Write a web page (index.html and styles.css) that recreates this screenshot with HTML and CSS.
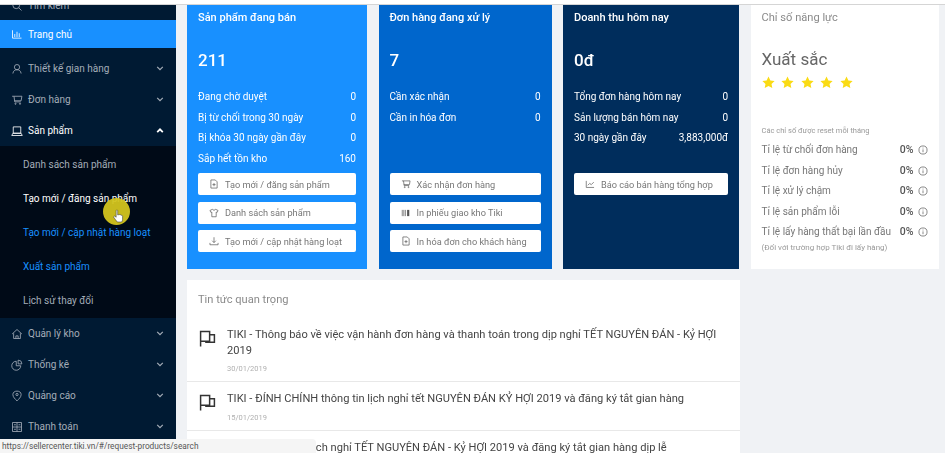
FILE: index.html
```html
<!DOCTYPE html>
<html lang="vi">
<head>
  <meta charset="UTF-8" />
  <title>Seller Center</title>
  <link rel="stylesheet" href="styles.css">
</head>
<body>
  <svg class="sprite" width="0" height="0">
    <symbol id="i-search" viewBox="0 0 16 16"><circle cx="7" cy="7" r="4.5"/><path d="M10.5 10.5 14 14"/></symbol>
    <symbol id="i-chart" viewBox="0 0 16 16"><path d="M2 3v10.5h12M5 12V8M8 12V5M11 12V7"/></symbol>
    <symbol id="i-user" viewBox="0 0 16 16"><circle cx="8" cy="5.5" r="3.5"/><path d="M2.5 14c.5-3.5 2.5-5 5.500-5s5 1.500 5.500 5"/></symbol>
    <symbol id="i-cart" viewBox="0 0 16 16"><path d="M1.500 3h13l-1 6H4.500M4 3l1 7.500h8"/><circle cx="6" cy="13" r=".8"/><circle cx="12" cy="13" r=".8"/></symbol>
    <symbol id="i-laptop" viewBox="0 0 16 16"><path d="M3 2.500h10v8.500H3zM1 14h14l-1.500-3h-11z"/></symbol>
    <symbol id="i-home" viewBox="0 0 16 16"><path d="M1.500 8 8 2l6.500 6M3.500 7v7h9V7M6.500 14v-3.500h3V14"/></symbol>
    <symbol id="i-pie" viewBox="0 0 16 16"><path d="M7 3a6 6 0 1 0 6 6H7zM9.500 1.500a5 5 0 0 1 5 5h-5z"/></symbol>
    <symbol id="i-tag" viewBox="0 0 16 16"><path d="M8 1.500c3 0 5.500 1.500 5.500 4.500 0 3.500-3 6-5.500 8.500C5.500 12 2.500 9.500 2.500 6 2.500 3 5 1.500 8 1.500z"/><circle cx="8" cy="6" r="1.500"/></symbol>
    <symbol id="i-calc" viewBox="0 0 16 16"><path d="M2 2h12v12H2zM8 2v12M2 8h12M4 5h2.500M10 5h2.500M4 11h2.500M10 11h2.500"/></symbol>
    <symbol id="i-down" viewBox="0 0 10 6"><path d="M1.500 1 5 4.500 8.500 1"/></symbol>
    <symbol id="i-file" viewBox="0 0 16 16"><path d="M3 1.500h7l3 3v10H3zM8 6.500v5M5.500 9h5"/></symbol>
    <symbol id="i-shirt" viewBox="0 0 16 16"><path d="M5.500 2 1.500 4l1.500 3 1.500-.5V14h7V6.500l1.500.5 1.500-3-4-2c-.5 2-4.500 2-5 0z"/></symbol>
    <symbol id="i-download" viewBox="0 0 16 16"><path d="M8 2v8.500M5 7.500l3 3 3-3M1.500 11v3h13v-3"/></symbol>
    <symbol id="i-barcode" viewBox="0 0 16 16"><path d="M2 3v10M4.500 3v10M7 3v10"/><path class="fat" d="M11.500 3v10"/></symbol>
    <symbol id="i-line" viewBox="0 0 16 16"><path d="M2 3v10.500h12.500M4.500 10l3-3 2.500 2 4-4"/></symbol>
    <symbol id="i-info" viewBox="0 0 16 16"><circle cx="8" cy="8" r="6.500"/><path d="M8 7v4.500M8 4.200v1.300"/></symbol>
    <symbol id="i-flag" viewBox="0 0 16 16"><path d="M1.500 15.500V1.500h8.500v9H1.500M10 4.500h4.500v7H6.500v-1"/></symbol>
    <symbol id="i-star" viewBox="0 0 16 16"><path class="solid" d="M8 .6l2.300 4.800 5.200.7-3.800 3.600 1 5.200L8 12.400l-4.700 2.500 1-5.200L.5 6.100l5.200-.7z"/></symbol>
  </svg>

  <div class="topline"></div>
  <div class="app">
    <aside class="sidebar">
      <div class="search-row"><div class="menu-row">
        <svg class="ico"><use href="#i-search"/></svg><span>Tìm kiếm</span>
      </div></div>
      <a class="menu-home"><svg class="ico"><use href="#i-chart"/></svg><span>Trang chủ</span></a>
      <div class="menu-group">
        <a class="menu-row"><svg class="ico"><use href="#i-user"/></svg><span>Thiết kế gian hàng</span><svg class="caret"><use href="#i-down"/></svg></a>
        <a class="menu-row"><svg class="ico"><use href="#i-cart"/></svg><span>Đơn hàng</span><svg class="caret"><use href="#i-down"/></svg></a>
        <a class="menu-row open"><svg class="ico"><use href="#i-laptop"/></svg><span>Sản phẩm</span><svg class="caret up"><use href="#i-down"/></svg></a>
      </div>
      <div class="submenu">
        <a>Danh sách sản phẩm</a>
        <a class="bright">Tạo mới / đăng sản phẩm</a>
        <a class="link">Tạo mới / cập nhật hàng loạt</a>
        <a class="link">Xuất sản phẩm</a>
        <a>Lịch sử thay đổi</a>
      </div>
      <div class="menu-group">
        <a class="menu-row"><svg class="ico"><use href="#i-home"/></svg><span>Quản lý kho</span><svg class="caret"><use href="#i-down"/></svg></a>
        <a class="menu-row"><svg class="ico"><use href="#i-pie"/></svg><span>Thống kê</span><svg class="caret"><use href="#i-down"/></svg></a>
        <a class="menu-row"><svg class="ico"><use href="#i-tag"/></svg><span>Quảng cáo</span><svg class="caret"><use href="#i-down"/></svg></a>
        <a class="menu-row"><svg class="ico"><use href="#i-calc"/></svg><span>Thanh toán</span><svg class="caret"><use href="#i-down"/></svg></a>
      </div>
    </aside>

    <main class="content">
      <section class="cards">
        <div class="card card-sky">
          <h3>Sản phẩm đang bán</h3>
          <div class="big">211</div>
          <ul class="stats">
            <li><span>Đang chờ duyệt</span><span>0</span></li>
            <li><span>Bị từ chối trong 30 ngày</span><span>0</span></li>
            <li><span>Bị khóa 30 ngày gần đây</span><span>0</span></li>
            <li><span>Sắp hết tồn kho</span><span>160</span></li>
          </ul>
          <div class="actions">
            <a class="btn"><svg><use href="#i-file"/></svg>Tạo mới / đăng sản phẩm</a>
            <a class="btn"><svg><use href="#i-shirt"/></svg>Danh sách sản phẩm</a>
            <a class="btn"><svg><use href="#i-download"/></svg>Tạo mới / cập nhật hàng loạt</a>
          </div>
        </div>

        <div class="card card-blue">
          <h3>Đơn hàng đang xử lý</h3>
          <div class="big">7</div>
          <ul class="stats">
            <li><span>Cần xác nhận</span><span>0</span></li>
            <li><span>Cần in hóa đơn</span><span>0</span></li>
          </ul>
          <div class="actions">
            <a class="btn"><svg><use href="#i-cart"/></svg>Xác nhận đơn hàng</a>
            <a class="btn"><svg><use href="#i-barcode"/></svg>In phiếu giao kho Tiki</a>
            <a class="btn"><svg><use href="#i-file"/></svg>In hóa đơn cho khách hàng</a>
          </div>
        </div>

        <div class="card card-navy">
          <h3>Doanh thu hôm nay</h3>
          <div class="big">0đ</div>
          <ul class="stats">
            <li><span>Tổng đơn hàng hôm nay</span><span>0</span></li>
            <li><span>Sản lượng bán hôm nay</span><span>0</span></li>
            <li><span>30 ngày gần đây</span><span>3,883,000đ</span></li>
          </ul>
          <div class="actions">
            <a class="btn"><svg><use href="#i-line"/></svg>Báo cáo bán hàng tổng hợp</a>
          </div>
        </div>

        <div class="card card-white">
          <h3>Chỉ số năng lực</h3>
          <div class="grade">Xuất sắc</div>
          <div class="stars">
            <svg><use href="#i-star"/></svg><svg><use href="#i-star"/></svg><svg><use href="#i-star"/></svg><svg><use href="#i-star"/></svg><svg><use href="#i-star"/></svg>
          </div>
          <p class="note">Các chỉ số được reset mỗi tháng</p>
          <ul class="rates">
            <li><span>Tỉ lệ từ chối đơn hàng</span><b>0%</b><svg><use href="#i-info"/></svg></li>
            <li><span>Tỉ lệ đơn hàng hủy</span><b>0%</b><svg><use href="#i-info"/></svg></li>
            <li><span>Tỉ lệ xử lý chậm</span><b>0%</b><svg><use href="#i-info"/></svg></li>
            <li><span>Tỉ lệ sản phẩm lỗi</span><b>0%</b><svg><use href="#i-info"/></svg></li>
            <li><span>Tỉ lệ lấy hàng thất bại lần đầu</span><b>0%</b><svg><use href="#i-info"/></svg></li>
          </ul>
          <p class="note note-wide">(Đối với trường hợp Tiki đi lấy hàng)</p>
        </div>
      </section>

      <section class="news">
        <h3>Tin tức quan trọng</h3>
        <div class="news-item">
          <svg class="flag"><use href="#i-flag"/></svg>
          <div>
            <p>TIKI - Thông báo về việc vận hành đơn hàng và thanh toán trong dịp nghỉ TẾT NGUYÊN ĐÁN - Kỷ HỢI 2019</p>
            <small>30/01/2019</small>
          </div>
        </div>
        <div class="news-item">
          <svg class="flag"><use href="#i-flag"/></svg>
          <div>
            <p>TIKI - ĐÍNH CHÍNH thông tin lịch nghỉ tết NGUYÊN ĐÁN KỶ HỢI 2019 và đăng ký tắt gian hàng</p>
            <small>15/01/2019</small>
          </div>
        </div>
        <div class="news-item">
          <svg class="flag"><use href="#i-flag"/></svg>
          <div>
            <p>TIKI - Thông báo lịch nghỉ TẾT NGUYÊN ĐÁN - Kỷ HỢI 2019 và đăng ký tắt gian hàng dịp lễ</p>
          </div>
        </div>
      </section>
    </main>
  </div>

  <!-- con tro chuot + thanh trang thai cua trinh duyet -->
  <div class="cursor-glow"></div>
  <svg class="cursor-hand" viewBox="0 0 14 18"><path d="M4 1.500c0-1 2-1 2 0V7l1-.2c.5-.6 1.500-.4 1.800.2.600-.4 1.500-.2 1.700.5.800-.3 1.700.2 1.700 1.200v3.800c0 1.500-.6 2.500-1.200 3.500H5.500C4.500 14.500 2 12 1 10c-.4-1 .8-2 1.700-1.200L4 10z"/></svg>
  <div class="status-bar">https://sellercenter.tiki.vn/#/request-products/search</div>
</body>
</html>
```

FILE: styles.css
```css
* {
  box-sizing: border-box;
}

html, body {
  margin: 0;
  padding: 0;
  height: 100%;
  overflow: hidden;
}

body {
  font-family: Roboto, 'Noto Sans', Arial, sans-serif;
  font-size: 10px;
  background: #f0f2f5;
  color: #5c5c5c;
}

ul {
  list-style: none;
  margin: 0;
  padding: 0;
}

svg {
  fill: none;
  stroke: currentColor;
  stroke-width: 1.1;
}

.sprite {
  position: absolute;
}

.solid {
  fill: currentColor;
  stroke: none;
}

.fat {
  stroke-width: 3.5;
}

.topline {
  height: 5px;
  background: #fff;
  border-bottom: 1px solid #d5d5d5;
  position: relative;
  z-index: 2;
}

.app {
  display: flex;
  height: 448px;
  overflow: hidden;
  filter: blur(0.45px);
}

/* menu ben trai */
.sidebar {
  width: 176px;
  flex: none;
  background: #001a33;
  color: #a4adb8;
  overflow: hidden;
}

.search-row {
  height: 15px;
  overflow: hidden;
}

.search-row .menu-row {
  margin-top: -15px;
}

.menu-row {
  display: flex;
  align-items: center;
  height: 31px;
  padding: 0 12px 0 11px;
}

.menu-row span {
  flex: 1;
}

.menu-row.open {
  color: #fff;
}

.ico {
  width: 12px;
  height: 12px;
  margin-right: 5px;
  flex: none;
}

.caret {
  width: 8px;
  height: 5px;
  stroke-width: 1.5;
}

.caret.up {
  transform: rotate(180deg);
  color: #fff;
  stroke-width: 2.2;
}

.menu-home {
  display: flex;
  align-items: center;
  height: 28px;
  padding: 0 12px 0 11px;
  background: #1890ff;
  color: #fff;
  margin-bottom: 5px;
}

.submenu {
  background: #000a17;
  padding-top: 1px;
  height: 172px;
  display: flex;
  flex-direction: column;
}

.submenu a {
  flex: 1;
  display: flex;
  align-items: center;
  padding-left: 23px;
}

.submenu .bright {
  color: #fff;
}

.submenu .link {
  color: #1890ff;
}

/* noi dung chinh */
.content {
  flex: 1;
  padding: 0 6px 0 11px;
  min-width: 0;
}

.cards {
  display: flex;
  gap: 11.500px;
  height: 264px;
}

.card {
  padding: 5px 11px;
  display: flex;
  flex-direction: column;
  color: #fff;
}

.card h3 {
  margin: 0;
  font-size: 11px;
  font-weight: 500;
  line-height: 16px;
}

.card-sky {
  width: 180px;
  background: #1890ff;
}

.card-blue {
  width: 173px;
  background: #0066cc;
}

.card-navy {
  width: 176px;
  background: #002d5c;
}

.card-white {
  width: 188px;
  background: #fff;
  color: #666;
}

.card-white h3 {
  font-size: 11.100px;
  font-weight: 400;
  color: #8a8a8a;
}

.big {
  font-size: 17px;
  font-weight: 500;
  line-height: 22px;
  margin-top: 23px;
  margin-bottom: 16px;
}

.stats {
  height: 86px;
}

.stats li {
  display: flex;
  justify-content: space-between;
  line-height: 20.500px;
}

.actions {
  display: flex;
  flex-direction: column;
  gap: 6.500px;
}

.btn {
  display: flex;
  align-items: center;
  height: 22px;
  padding-left: 11px;
  background: #fff;
  color: #777;
  border-radius: 2px;
  font-size: 9.200px;
}

.btn svg {
  width: 10px;
  height: 10px;
  margin-right: 6px;
  flex: none;
  color: #555;
}

.grade {
  font-size: 17px;
  line-height: 24px;
  margin-top: 21px;
  color: #666;
}

.stars {
  display: flex;
  gap: 6.500px;
  margin-top: 5px;
  margin-bottom: 36px;
  color: #fadb14;
}

.stars svg {
  width: 13px;
  height: 13px;
}

.note {
  margin: 0;
  font-size: 7.500px;
  line-height: 12px;
  color: #999;
}

.note-wide {
  font-size: 8px;
}

.rates {
  margin-top: 3px;
  margin-bottom: -1px;
}

.rates li {
  display: flex;
  align-items: center;
  line-height: 20.500px;
  color: #777;
}

.rates span {
  flex: 1;
  white-space: nowrap;
}

.rates b {
  font-size: 10.500px;
  font-weight: 500;
  color: #555;
  margin-right: 4px;
}

.rates svg {
  width: 10px;
  height: 10px;
  flex: none;
  color: #555;
}

.news {
  margin-top: 11px;
  width: 553px;
  background: #fff;
}

.news h3 {
  margin: 0;
  padding: 12px 11px 10px;
  font-size: 11.100px;
  font-weight: 400;
  line-height: 16px;
  color: #8a8a8a;
}

.news-item {
  display: flex;
  padding: 9px 11px 0 12px;
  border-bottom: 1px solid #e8e8e8;
  color: #444;
}

.news-item p {
  margin: 0;
  font-size: 11.100px;
  line-height: 15.500px;
}

.news-item small {
  display: block;
  font-size: 7.500px;
  line-height: 12px;
  margin: 5px 0 6px;
  color: #b0b0b0;
}

.flag {
  width: 17px;
  height: 17px;
  margin-right: 11px;
  margin-top: 3px;
  flex: none;
  color: #333;
  stroke-width: 1.4;
}

/* lop phu */
.cursor-glow {
  position: absolute;
  left: 103px;
  top: 198px;
  width: 27px;
  height: 27px;
  border-radius: 50%;
  background: #d2c41e;
  opacity: 0.95;
}

.cursor-hand {
  position: absolute;
  left: 113px;
  top: 209px;
  width: 11px;
  height: 15px;
  fill: #fff;
  stroke: #333;
  stroke-width: 0.7;
}

.status-bar {
  position: absolute;
  left: 0;
  bottom: 0;
  width: 316px;
  height: 14px;
  padding-left: 2px;
  background: #f5f5f5;
  border-top-right-radius: 4px;
  color: #555;
  font-size: 8.300px;
  line-height: 14px;
}
```
